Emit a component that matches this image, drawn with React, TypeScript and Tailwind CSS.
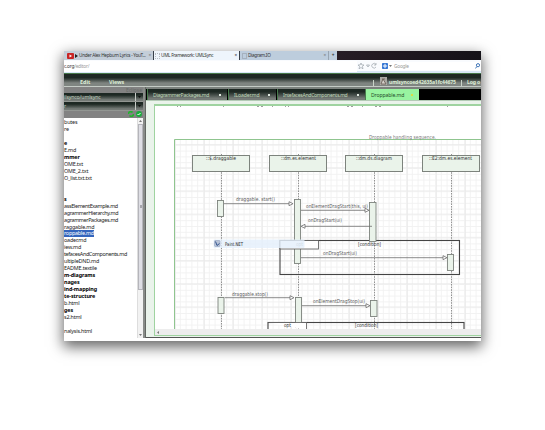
import React from "react";

const files: [string, boolean?][] = [
  ["butes"], ["re"], [""], ["e", true], ["E.md"], ["mmer", true], ["OME.txt"], ["OME_2.txt"], ["O_list.txt.txt"], [""],
  [""], ["s", true], ["assElementExample.md"], ["agrammerHierarchy.md"], ["agrammerPackages.md"], ["raggable.md"],
  ["roppable.md"], ["oader.md"], ["iew.md"], ["tefacesAndComponents.md"], ["ultipleDND.md"], ["EADME.textile"],
  ["m-diagrams", true], ["nages", true], ["ind-mapping", true], ["te-structure", true], ["b.html"], ["ges", true],
  ["s2.html"], [""], ["nalysis.html"],
];

const barBg = "bg-linear-to-b from-[#1d2823] from-25% to-[#757b77] to-85%";

function T({ x, y, w, children, fill = "#5c5c5c", size = 5.4 }: {
  x: number; y: number; w: number; children: string; fill?: string; size?: number;
}) {
  return (
    <text x={x} y={y} textLength={w} lengthAdjust="spacingAndGlyphs" fontSize={size} fill={fill}
      fontFamily="'DejaVu Sans', sans-serif">{children}</text>
  );
}

function Arrow({ x1, x2, y, left = false }: { x1: number; x2: number; y: number; left?: boolean }) {
  const tip = left ? x1 : x2;
  const base = left ? x1 + 4 : x2 - 4;
  return (
    <g stroke="#6d6d6d" strokeWidth="0.8" fill="white">
      <path d={`M${left ? base : x1} ${y}H${left ? x2 : base}`} />
      <path d={`M${tip} ${y}L${base} ${y - 2}V${y + 2}Z`} />
    </g>
  );
}

function Diagram() {
  const heads: [number, string, number, number][] = [
    [192.5, "::$.draggable", 206, 30], [269.5, "::dm.es.element", 281, 35],
    [345.5, "::dm.ds.diagram", 356, 36], [422.5, "::E2:dm.es.element", 429, 43],
  ];
  const acts = [
    [217.5, 200.5, 6, 16], [294.5, 199.5, 6, 64], [369.5, 202.5, 6.5, 39], [447.5, 254.5, 6, 16],
    [218, 297.5, 6, 16], [295.5, 297.5, 6, 30], [370.5, 300.5, 6.5, 16],
  ];
  return (
    <svg className="block h-[223px] w-[326px]" viewBox="155 106 326 223">
      <defs>
        <pattern id="grid" x="174" y="139" width="5.8" height="5.8" patternUnits="userSpaceOnUse">
          <path d="M0 .5H5.8M.5 0V5.8" stroke="#f1f1f1" strokeWidth="0.9" />
        </pattern>
        <pattern id="major" x="175" y="144" width="29" height="23.2" patternUnits="userSpaceOnUse">
          <path d="M0 .5H29M.5 0V23.2" stroke="#eaeaea" strokeWidth="0.8" />
        </pattern>
      </defs>
      <path d="M177 106h1M180 106h1M223 106h1M257 106h2M261 106h2M272 106h1M285 106h1M288 106h1M347 106h2M351 106h2M362 106h1M375 106h2M379 106h2M447 106h1" stroke="#444" strokeWidth="1.2" />
      <rect x="174" y="139" width="310" height="192" fill="url(#grid)" />
      <rect x="174" y="139" width="310" height="192" fill="url(#major)" />
      <path d="M481 139.5H174.5V330" fill="none" stroke="#8fc58f" />
      <T x={369} y={139} w={67} fill="#7c7c7c">Droppable handling sequence.</T>
      {[221.5, 298.5, 374.5, 451.5].map((x) => (
        <path key={x} d={`M${x} 154V329`} stroke="#777" strokeWidth="0.8" strokeDasharray="1.6 1" />
      ))}
      {heads.map(([x, label, tx, tw]) => (
        <g key={label}>
          <rect x={x} y="155.5" width="57" height="16" fill="#eaf3ea" stroke="#7d837d" />
          <T x={tx} y={160} w={tw} fill="#2c2c2c" size={5.2}>{label}</T>
        </g>
      ))}
      <rect x="280" y="240.5" width="179.5" height="34" fill="none" stroke="#444" strokeWidth="1.1" />
      <rect x="268" y="322.5" width="196" height="20" fill="none" stroke="#444" strokeWidth="1.1" />
      {acts.map(([x, y, w, h]) => (
        <rect key={`${x}-${y}`} x={x} y={y} width={w} height={h} fill="#eaf3ea" stroke="#7d837d" strokeWidth="0.9" />
      ))}
      <rect x="280" y="240.5" width="38.5" height="8.5" fill="white" stroke="#555" strokeWidth="0.8" />
      <path d="M268 322.5H306.5V330" fill="white" stroke="#555" strokeWidth="0.8" />
      <Arrow x1={224} x2={293} y={203.7} />
      <Arrow x1={301} x2={369} y={210.3} />
      <Arrow x1={301} x2={372} y={226.3} left />
      <Arrow x1={301} x2={447} y={257.7} />
      <Arrow x1={225} x2={294} y={297.7} />
      <Arrow x1={302} x2={370} y={305.7} />
      <T x={236} y={201} w={39}>draggable. start()</T>
      <T x={306} y={208} w={62}>onElementDragStart(this, ui)</T>
      <T x={308} y={222} w={34}>onDragStart(ui)</T>
      <T x={323} y={255} w={34}>onDragStart(ui)</T>
      <T x={232} y={296} w={36}>draggable.stop()</T>
      <T x={313} y={303} w={52}>onElementDragStop(ui)</T>
      <T x={358} y={245.5} w={23} fill="#333">[condition]</T>
      <T x={355} y={327} w={23} fill="#333">[condition]</T>
      <T x={284} y={327} w={7} fill="#333">opt</T>
      <T x={296} y={245.5} w={7} fill="#888">opt</T>
      <rect x="213.5" y="239.5" width="91" height="8.5" rx="1" fill="#e3effb" fillOpacity="0.8" />
      <rect x="214.5" y="240.5" width="5.5" height="6" rx="0.8" fill="#b9c4d8" stroke="#8997b5" strokeWidth="0.5" />
      <path d="M215.5 241.5l1.5 4 2.5-2" fill="none" stroke="#34558f" strokeWidth="1" />
      <T x={225} y={245.6} w={18} fill="#222" size={5}>Paint.NET</T>
    </svg>
  );
}

function BrowserTabs() {
  return (
    <div className="flex h-[9px] bg-linear-to-r from-[#17131a] via-[#30222b] to-[#151218] text-[4.7px] leading-[9px] tracking-[-0.3px] whitespace-nowrap text-[#333]">
      <div className="flex w-[90px] shrink-0 items-center border-r border-[#38404a] bg-[#c4ced9] pl-[3px]">
        <svg className="h-[6px] w-[7px] shrink-0" viewBox="0 0 7 6"><rect width="7" height="6" rx="1" fill="#c92525" /><path d="M2.5 1.5v3L5 3z" fill="white" /></svg>
        <svg className="ml-[1px] h-[4px] w-[3px] shrink-0" viewBox="0 0 3 4"><path d="M0 0v4l3-2z" fill="#222" /></svg>
        <span className="ml-[1px]">Under Alex Hepburn Lyrics - YouT...</span>
        <span className="mr-[2px] ml-auto text-[#777]">×</span>
      </div>
      <div className="flex w-[86px] shrink-0 items-center border-r border-[#38404a] bg-[#eef5fc] pl-[1px]">
        <span className="mr-[1px] h-[6px] w-[5px] shrink-0 rounded-[1px] border border-dotted border-[#b5bbc2]" />
        <span>UML Framework: UMLSync</span>
        <span className="mr-[2px] ml-auto">×</span>
      </div>
      <div className="flex w-[88px] shrink-0 items-center bg-[#bdcddd] pl-[2px]">
        <span className="mr-[1px] h-[6px] w-[5px] border border-[#a5b1be]" />
        <span>Diagram.IO</span>
        <span className="mr-[2px] ml-auto text-[#777]">×</span>
      </div>
      <div className="w-[9px] shrink-0 border-l border-[#98a5b2] bg-[#bdcddd] text-center font-bold">+</div>
    </div>
  );
}

function AddressBar() {
  return (
    <div className="flex h-[13px] items-start border-b-2 border-[#d9e8f7] bg-[#f9fbfe] pt-[1px] text-[4.8px] leading-[11px] tracking-[-0.25px] text-[#999]">
      <span className="w-[293px] bg-white"><span className="text-[#333]">c.org</span>/editor/</span>
      <svg className="mt-[1px] h-[8px] w-[20px]" viewBox="0 0 20 8" fill="none" stroke="#9ba3aa" strokeWidth=".7">
        <path d="M4 1l.9 2h2.1L5.4 4.4 6 6.8 4 5.5 2 6.8l.6-2.4L1 3h2.1zM9.5 3h3l-1.5 2zM19 2.5A2.3 2.3 0 1 0 19 5M19 1v2h-2" />
      </svg>
      <span className="mt-[1px] ml-[3px] flex h-[8px] w-[101px] items-center bg-white">
        <svg className="ml-[2px] h-[6px] w-[6px]" viewBox="0 0 6 6"><rect width="6" height="6" rx=".8" fill="#3577d4" /><path d="M3 .8V5.2M.8 3H5.2" stroke="white" strokeWidth="1" /></svg>
        <svg className="ml-[1px] h-[2px] w-[3px]" viewBox="0 0 3 2"><path d="M0 0h3L1.5 2z" fill="#777" /></svg>
        <span className="ml-[2px]">Google</span>
        <svg className="mr-px ml-auto h-[6px] w-[5px]" viewBox="0 0 5 6" fill="none" stroke="#3f75b7" strokeWidth="1"><circle cx="3" cy="2.2" r="1.6" /><path d="M2 3.5L.3 5.5" /></svg>
      </span>
    </div>
  );
}

function AppHeader() {
  return (
    <div className="flex h-[14px] items-center overflow-hidden border-t border-b border-t-[#477849] border-b-[#c4cbc5] bg-linear-to-b from-[#1e2823] from-30% to-[#7f8581] to-75% pt-[5px] text-[5.4px] leading-[7px] font-bold whitespace-nowrap text-[#dcecd5]">
      <span className="ml-[16px] w-[29px] shrink-0">Edit</span>
      <span className="w-[264px] shrink-0 tracking-[-0.1px]">Views</span>
      <span className="h-[6px] w-px shrink-0 bg-[#c9d4c8]" />
      <svg className="mb-[3px] ml-[6px] h-[8px] w-[7px] shrink-0" viewBox="0 0 7 8"><rect width="7" height="8" fill="#aaa9a4" /><path d="M1 7l2-5 3 5zM2 2h3" stroke="#665951" fill="#d4d0ca" strokeWidth=".8" /></svg>
      <span className="ml-[2px] w-[72px] shrink-0 text-[5.1px] tracking-[-0.15px]">umlsyncoed42635a1fc44675</span>
      <span className="h-[6px] w-px shrink-0 bg-[#c9d4c8]" />
      <span className="ml-[5px] shrink-0 text-[5.1px] tracking-[-0.15px]">Log o</span>
    </div>
  );
}

function Sidebar() {
  return (
    <div className="flex w-[79px] shrink-0 flex-col bg-[#828282]">
      <div className="h-[6px] pr-[1px] text-right text-[5px] leading-[6px] text-[#666b67]">Eclipse</div>
      {["ilsynco/umlsync", "r"].map((label) => (
        <div key={label} className={`flex h-[9px] items-center justify-between border-b border-[#929692] text-[5.2px] leading-[8px] tracking-[-0.15px] text-[#c3d3c0] ${barBg}`}>
          <span>{label}</span>
          <span className="flex h-[8px] w-[8px] items-center justify-center border-l border-[#c6cac6]">
            <svg className="h-[2px] w-[3px]" viewBox="0 0 3 2"><path d="M0 0h3L1.5 2z" fill="#111" /></svg>
          </span>
        </div>
      ))}
      <div className="flex h-[7px] items-center justify-end gap-[2px] pr-[1px]">
        <svg className="h-[6px] w-[6px]" viewBox="0 0 6 6" fill="none" stroke="#20b52c" strokeWidth="1.5"><path d="M.5 3A2.3 2.3 0 0 1 4.5 1.4M5.5 3A2.3 2.3 0 0 1 1.5 4.6" /></svg>
        <svg className="h-[6px] w-[6px]" viewBox="0 0 6 6"><circle cx="3" cy="3" r="2.9" fill="#18ad3c" /><path d="M1.5 3l1 1 2-2" fill="none" stroke="white" strokeWidth="1" /></svg>
      </div>
      <div className="flex h-[221px] bg-white">
        <div className="w-[73px] shrink-0 pt-[1px] text-[5.4px] leading-[6.97px] text-[#222]">
          {files.map(([name, bold], i) => (
            <div key={i} className="h-[6.97px] whitespace-nowrap">
              <span className={name === "roppable.md" ? "inline-block h-[6.97px] bg-[#3465bd] tracking-[-0.25px] text-white" : bold ? "font-bold tracking-[-0.1px] text-black" : name.length < 15 ? "tracking-[-0.18px]" : "tracking-[-0.33px]"}>{name}</span>
            </div>
          ))}
        </div>
        <div className="flex w-[6px] flex-col items-center border-l border-[#ddd] bg-[#f2f2f2]">
          <svg className="my-[2px] h-[2px] w-[3px] shrink-0" viewBox="0 0 3 2"><path d="M0 2h3L1.5 0z" fill="#777" /></svg>
          <span className="flex h-[166px] w-[5px] items-center justify-center border border-[#b5b5bb] bg-[#dedee4]"><i className="h-[3px] w-[2px] bg-[#a5a5ab]" /></span>
          <svg className="mt-auto mb-[2px] h-[2px] w-[3px] shrink-0" viewBox="0 0 3 2"><path d="M0 0h3L1.5 2z" fill="#777" /></svg>
        </div>
      </div>
    </div>
  );
}

function EditorTab({ label, className, textClass = "", markClass = "bg-[#dfe8df]" }: {
  label: string; className: string; textClass?: string; markClass?: string;
}) {
  return (
    <div className={`flex h-[11px] shrink-0 items-center justify-between border-l border-[#477a4c] pt-[1px] pr-[6px] pl-[5px] ${className}`}>
      <span className={`whitespace-nowrap ${textClass}`}>{label}</span>
      <span className={`size-[2px] shrink-0 ${markClass}`} />
    </div>
  );
}

export default function App() {
  return (
    <div className="h-[430px] w-[545px] overflow-hidden bg-white pt-[51px] pl-[64px] font-[family-name:'Noto_Sans',sans-serif]">
      <div className="h-[290px] w-[417px] shadow-[0_5px_13px_1px_rgba(0,0,0,0.6)]">
        <div className="h-[290px] w-[417px] overflow-hidden bg-white">
          <BrowserTabs />
          <AddressBar />
          <AppHeader />
          <div className="flex h-[251px]">
            <Sidebar />
            <div className="w-[3px] shrink-0 border-r border-[#636863] bg-[#898c89]" />
            <div className="flex w-[335px] flex-col border-b border-[#555] bg-[#eaf3eb]">
              <div className="h-[2px] shrink-0 bg-[#7b817d]" />
              <div className="flex h-[11px] shrink-0 bg-black pl-[1px] text-[5.1px] leading-[9px] tracking-[-0.28px] text-[#c0dabb]">
                <EditorTab label="DiagrammerPackages.md" className={`w-[80px] ${barBg}`} />
                <EditorTab label="ILoader.md" className={`ml-[1px] w-[48px] ${barBg}`} textClass="tracking-[-0.15px]" />
                <EditorTab label="IntefacesAndComponents.md" className={`ml-[1px] w-[88px] ${barBg}`} />
                <EditorTab label="Droppable.md" textClass="text-[#254b28] tracking-[-0.1px]" markClass="bg-[#d9dd45]" className="w-[54px] bg-[#98f4a0]" />
              </div>
              <div className="h-[4px] shrink-0 border-t border-[#b4cbb6]" />
              <div className="ml-[8px] flex h-[232px] w-[327px] shrink-0 flex-col border-t-2 border-r-0 border-b border-l border-[#9fd3a0] bg-white">
                <Diagram />
                <div className="flex h-[6px] items-center bg-[#ededed] pl-[2px]">
                  <svg className="h-[3px] w-[2px]" viewBox="0 0 2 3"><path d="M2 0v3L0 1.5z" fill="#777" /></svg>
                </div>
              </div>
              <div className="h-px bg-[#eaf3eb]" />
            </div>
          </div>
        </div>
      </div>
    </div>
  );
}
